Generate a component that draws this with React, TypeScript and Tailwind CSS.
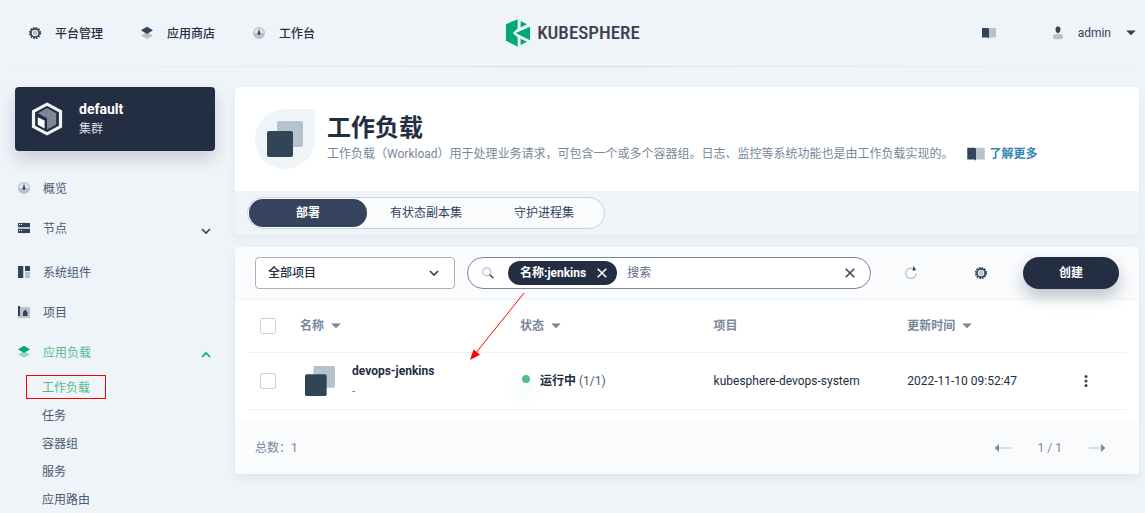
import React from 'react';

type IconProps = { className?: string };

const Gear = ({ className = 'size-4' }: IconProps) => (
  <svg viewBox="0 0 16 16" className={className} aria-hidden="true">
    <circle cx="8" cy="8" r="5.3" fill="none" stroke="#324558" strokeWidth="1.7" strokeDasharray="1.6 1.175" />
    <circle cx="8" cy="8" r="4.1" fill="#eff4f9" stroke="#324558" strokeWidth="1.7" />
    <circle cx="8" cy="8" r="2.4" fill="#b6c2cd" />
  </svg>
);

const Layers = ({ active = false }: { active?: boolean }) => (
  <svg viewBox="0 0 16 16" className="size-4" aria-hidden="true">
    <path d="M2 10.6 8 7.2l6 3.400L8 14z" fill={active ? '#90e0c5' : '#b6c2cd'} />
    <path d="M2 5.300 8 1.800l6 3.500L8 8.900z" fill={active ? '#00aa72' : '#324558'} />
  </svg>
);

const Gauge = () => (
  <svg viewBox="0 0 16 16" className="size-4" aria-hidden="true">
    <circle cx="8" cy="8" r="6" fill="#b6c2cd" />
    <path d="M3.2 8a4.8 4.8 0 0 1 9.6 0z" fill="#dfe6ed" />
    <path d="M8 3.800 9.300 8.200A1.350 1.350 0 1 1 6.700 8.200z" fill="#324558" />
  </svg>
);

const Servers = () => (
  <svg viewBox="0 0 16 16" className="size-4" aria-hidden="true">
    <path d="M7 2h2v12H7zM2 7h12v2H2z" fill="#b6c2cd" />
    <path d="M2 3h12v4H2zM2 9h12v4H2z" fill="#324558" />
    <path d="M3 4h1v1H3zM5 4h1v1H5zM3 10h1v1H3zM5 10h1v1H5z" fill="#fff" />
  </svg>
);

const Components = () => (
  <svg viewBox="0 0 16 16" className="size-4" aria-hidden="true">
    <path d="M2 2h5v12H2zM9 2h5v5H9z" fill="#324558" />
    <path d="M7 2h1v12H7zM9 8h5v6H9z" fill="#b6c2cd" />
  </svg>
);

const Project = () => (
  <svg viewBox="0 0 16 16" className="size-4" aria-hidden="true">
    <path d="M4 3h10v11H2v-2h2z" fill="#b6c2cd" />
    <path d="M2 2h2v10H2zM7 8l2.200-2.500L11.500 8v4H7z" fill="#324558" />
  </svg>
);

const Book = ({ className = 'size-4' }: IconProps) => (
  <svg viewBox="0 0 16 16" className={className} aria-hidden="true">
    <path d="M8 3.6 9 3h6v9.4H9l-1 .8z" fill="#b6c2cd" />
    <path d="M1 3h6l1 .6v9.8l-1-1H1z" fill="#324558" />
  </svg>
);

const User = () => (
  <svg viewBox="0 0 16 16" className="size-4" aria-hidden="true">
    <path d="M3 13.2V12c0-2 1.2-3 3-3h4c1.800 0 3 1 3 3v1.200c-1 .8-3 1-5 1s-4-.2-5-1z" fill="#b6c2cd" />
    <path d="M5.500 4a2.500 2.400 0 0 1 5 0c0 2-.8 4.200-2.500 4.200S5.500 6 5.500 4z" fill="#324558" />
  </svg>
);

const Caret = ({ className = '' }: IconProps) => (
  <svg viewBox="0 0 10 6" className={`h-[6px] w-[10px] ${className}`} aria-hidden="true">
    <path d="M.8.8h8.400L5 5z" fill="currentColor" stroke="currentColor" strokeWidth=".6" strokeLinejoin="round" />
  </svg>
);

const Chevron = ({ className = '' }: IconProps) => (
  <svg viewBox="0 0 10 10" className={`size-[10px] ${className}`} aria-hidden="true">
    <path d="M1 3l4 4 4-4" fill="none" stroke="currentColor" strokeWidth="1.6" />
  </svg>
);

const Cross = () => (
  <svg viewBox="0 0 10 10" className="size-[10px]" aria-hidden="true">
    <path d="M.7.7l8.600 8.600M9.300.7.7 9.300" stroke="currentColor" strokeWidth="1.500" />
  </svg>
);

const Workload = ({ className }: IconProps) => (
  <svg viewBox="0 0 36 36" className={className} aria-hidden="true">
    <rect x="10" width="26" height="26" rx="2" fill="#b6c2cd" />
    <rect y="10" width="26" height="26" rx="2" fill="#324558" />
  </svg>
);

const Arrow = ({ flip = false }: { flip?: boolean }) => (
  <svg viewBox="0 0 16 8" className={flip ? 'h-2 w-4 rotate-180' : 'h-2 w-4'} aria-hidden="true">
    <path d="M0 3h12v2H0z" fill="#d5dce3" />
    <path d="M12 0 16.500 4 12 8z" fill="#7e8b99" />
  </svg>
);

const navItems = [
  { label: '平台管理', icon: <Gear /> },
  { label: '应用商店', icon: <Layers /> },
  { label: '工作台', icon: <Gauge /> },
];

const subItems = ['工作负载', '任务', '容器组', '服务', '应用路由'];
const tabs = ['部署', '有状态副本集', '守护进程集'];

function Header() {
  return (
    <header>
      <div className="grid h-[66px] grid-cols-[1fr_auto_1fr] items-center px-[9px]">
        <nav className="flex items-center gap-9 pl-[18px]">
          {navItems.map((item) => (
            <a key={item.label} href="#" className="flex items-center gap-3 font-medium text-[#242e42]">
              {item.icon}
              <span className="pt-[2px]">{item.label}</span>
            </a>
          ))}
        </nav>
        <a href="#" className="flex items-center gap-[6px]" aria-label="KubeSphere">
          <svg viewBox="0 0 76 86" className="h-[28px] w-[26px]" aria-hidden="true">
            <path
              d="M1 16 37 1v28L22 43l15 14v28L1 67zM46 6l20 10-20 10zM75 24v41L31 43zM46 61l20 9-20 10z"
              fill="#00aa72"
            />
          </svg>
          <span className="font-['Liberation_Sans_Narrow','Roboto_Condensed','Roboto',sans-serif] text-[19px] leading-7 font-medium text-[#433d50]">
            KUBESPHERE
          </span>
        </a>
        <div className="flex items-center justify-end">
          <button type="button" aria-label="文档" className="mr-[53px]">
            <Book />
          </button>
          <button type="button" className="flex items-center text-[#36435c]">
            <User />
            <span className="ml-3">admin</span>
            <Caret className="ml-[15px] text-[#324558]" />
          </button>
        </div>
      </div>
      <div className="h-px bg-linear-to-r from-transparent via-[#d8dee5] to-transparent" />
    </header>
  );
}

function SideLink({
  icon,
  label,
  active = false,
  toggle,
}: {
  icon: React.ReactNode;
  label: string;
  active?: boolean;
  toggle?: 'open' | 'closed';
}) {
  return (
    <a
      href="#"
      className={`flex h-10 items-center gap-[11px] pr-1 ${active ? 'text-[#55bc8a]' : 'text-[#4a5974]'}`}
    >
      {icon}
      <span className="flex-1 pt-[2px]">{label}</span>
      {toggle === 'closed' && <Chevron className="mt-[6px] text-[#324558]" />}
      {toggle === 'open' && <Chevron className="mt-[6px] rotate-180 text-[#00aa72]" />}
    </a>
  );
}

function Sidebar() {
  return (
    <aside className="w-[200px] shrink-0">
      <div className="flex h-16 items-center gap-[15px] rounded bg-[#242e42] pl-[15px] shadow-[0_8px_16px_0_rgba(35,35,80,0.18)]">
        <svg viewBox="0 0 34 36" className="h-9 w-[34px]" aria-hidden="true">
          <path d="M17 3.200 30.500 10.400v15.200L17 32.800 3.500 25.600V10.400z" fill="#242e42" stroke="#f0f2f4" strokeWidth="3.200" />
          <path d="M8 12.200 17 7l9.200 5.200v11.500l-9.200 4.800V17.200z" fill="#7e8795" />
          <path d="M7.800 16.300l6.800 3.200v8L7.800 23.800z" fill="#fff" />
        </svg>
        <div>
          <div className="text-sm leading-5 font-bold text-white">default</div>
          <div className="leading-5 text-[#d8dde5]">集群</div>
        </div>
      </div>
      <nav className="mt-[17px] pl-px">
        <SideLink icon={<Gauge />} label="概览" />
        <div className="mb-1">
          <SideLink icon={<Servers />} label="节点" toggle="closed" />
        </div>
        <SideLink icon={<Components />} label="系统组件" />
        <SideLink icon={<Project />} label="项目" />
        <SideLink icon={<Layers active />} label="应用负载" active toggle="open" />
        <ul className="pt-px pl-[10px]">
          {subItems.map((label, i) => (
            <li key={label} className="flex h-7 items-center">
              <a
                href="#"
                className={
                  i === 0
                    ? 'flex h-6 w-20 items-center border border-[#ff0000] pt-[2px] pl-[15px] text-[#55bc8a]'
                    : 'pt-[2px] pl-4 text-[#4a5974]'
                }
              >
                {label}
              </a>
            </li>
          ))}
        </ul>
      </nav>
    </aside>
  );
}

function Banner() {
  return (
    <section className="overflow-hidden rounded bg-white shadow-[0_4px_8px_0_rgba(36,46,66,0.06)]">
      <div className="flex h-[104px] items-center gap-3 px-5">
        <div className="flex size-[60px] shrink-0 items-center justify-center rounded-full rounded-tr-none bg-[#eff4f9]">
          <Workload className="size-9" />
        </div>
        <div className="pb-[3px]">
          <h1 className="text-2xl leading-8 font-semibold text-[#242e42]">工作负载</h1>
          <div className="flex items-center leading-5 text-[#79879c]">
            <p>工作负载（Workload）用于处理业务请求，可包含一个或多个容器组。日志、监控等系统功能也是由工作负载实现的。</p>
            <a href="#" className="ml-3 flex shrink-0 items-center gap-1 font-bold text-[#3385b0]">
              <Book className="size-5" />
              了解更多
            </a>
          </div>
        </div>
      </div>
      <div className="bg-[#eff4f9] px-3 py-[6px]">
        <div role="tablist" className="flex h-8 w-[358px] rounded-full border border-[#ccd3db] bg-[#f9fbfd] p-px">
          {tabs.map((label, i) => (
            <button
              key={label}
              type="button"
              role="tab"
              aria-selected={i === 0}
              className={`flex-1 rounded-full ${i === 0 ? 'bg-[#36435c] font-bold text-white' : 'text-[#36435c]'}`}
            >
              {label}
            </button>
          ))}
        </div>
      </div>
    </section>
  );
}

function Toolbar() {
  return (
    <div className="flex h-[53px] items-center rounded-t border-b border-[#eff4f9] bg-[#f9fbfd] px-5">
      <div className="relative mr-3 w-[200px] shrink-0">
        <select
          aria-label="项目"
          className="h-8 w-full appearance-none rounded border border-[#abb4be] bg-white pl-3 font-medium text-[#242e42]"
        >
          <option>全部项目</option>
        </select>
        <Chevron className="pointer-events-none absolute top-[11px] right-4 text-[#324558]" />
      </div>
      <div className="flex h-8 min-w-0 flex-1 items-center rounded-full border border-[#79879c] bg-white pr-[15px] pl-[14px]">
        <svg viewBox="0 0 12 12" className="size-3" aria-hidden="true">
          <circle cx="4.800" cy="4.800" r="4" fill="none" stroke="#b6c2cd" strokeWidth="1.200" />
          <path d="M7.800 7.800 11.300 11.300" stroke="#324558" strokeWidth="1.500" />
        </svg>
        <span className="ml-[14px] flex h-6 items-center gap-[11px] rounded-full bg-[#242e42] pr-[10px] pl-3 font-bold whitespace-nowrap text-white">
          名称:jenkins
          <button type="button" aria-label="移除">
            <Cross />
          </button>
        </span>
        <input
          type="text"
          aria-label="搜索"
          placeholder="搜索"
          className="ml-[10px] min-w-0 flex-1 outline-none placeholder:text-[#5f708a]"
        />
        <button type="button" aria-label="清除" className="text-[#324558]">
          <Cross />
        </button>
      </div>
      <button type="button" aria-label="刷新" className="ml-3 flex h-8 w-14 items-center justify-center">
        <svg viewBox="0 0 16 16" className="size-4" aria-hidden="true">
          <path d="M9.500 3.300A5.200 5.200 0 1 0 13.200 8.500" fill="none" stroke="#b6c2cd" strokeWidth="1.300" />
          <path d="M10.300 1l2.900 4-3.700.8z" fill="#324558" />
        </svg>
      </button>
      <button type="button" aria-label="设置" className="mx-3 flex h-8 w-[60px] items-center justify-center">
        <Gear />
      </button>
      <button
        type="button"
        className="h-8 w-24 shrink-0 rounded-full bg-[#242e42] font-bold text-white shadow-[0_8px_16px_0_rgba(36,46,66,0.28)]"
      >
        创建
      </button>
    </div>
  );
}

const checkbox = 'block size-4 appearance-none rounded-xs border border-[#ccd3db] bg-white';

function WorkloadTable() {
  return (
    <section className="relative mt-3 rounded bg-white shadow-[0_4px_8px_0_rgba(36,46,66,0.08)]">
      <Toolbar />
      <div className="px-3">
        <table className="w-full table-fixed text-left">
          <colgroup>
            <col className="w-[53px]" />
            <col className="w-[25%]" />
            <col className="w-[22%]" />
            <col className="w-[22%]" />
            <col />
            <col className="w-[49px]" />
          </colgroup>
          <thead>
            <tr className="h-[52px] border-b border-[#eff4f9] text-[#79879c]">
              <th className="pl-[13px]">
                <input type="checkbox" aria-label="全选" className={checkbox} />
              </th>
              <th className="font-semibold">
                <span className="flex items-center gap-[7px]">名称<Caret /></span>
              </th>
              <th className="font-semibold">
                <span className="flex items-center gap-[7px]">状态<Caret /></span>
              </th>
              <th className="font-semibold">项目</th>
              <th className="font-semibold">
                <span className="flex items-center gap-[7px]">更新时间<Caret /></span>
              </th>
              <th aria-label="操作" />
            </tr>
          </thead>
          <tbody>
            <tr className="h-[57px] border-b border-[#eff4f9] text-[#242e42]">
              <td className="pl-[13px]">
                <input type="checkbox" aria-label="选择 devops-jenkins" className={checkbox} />
              </td>
              <td>
                <div className="flex items-center gap-[17px] pl-[5px]">
                  <Workload className="size-[30px] shrink-0" />
                  <div className="leading-5">
                    <a href="#" className="font-bold">devops-jenkins</a>
                    <div className="text-[#79879c]">-</div>
                  </div>
                </div>
              </td>
              <td>
                <div className="flex items-center">
                  <span className="mr-[10px] mb-[3px] ml-[2px] size-2 rounded-full bg-[#55bc8a] shadow-[0_8px_16px_0_rgba(85,188,138,0.4)]" />
                  <span className="font-semibold">运行中</span>
                  <span className="ml-[3px] text-[#4a5974]">(1/1)</span>
                </div>
              </td>
              <td>kubesphere-devops-system</td>
              <td>2022-11-10 09:52:47</td>
              <td>
                <button type="button" aria-label="更多操作" className="block">
                  <svg viewBox="0 0 16 16" className="size-4" fill="#324558" aria-hidden="true">
                    <circle cx="8" cy="3.500" r="1.500" />
                    <circle cx="8" cy="8" r="1.500" />
                    <circle cx="8" cy="12.500" r="1.500" />
                  </svg>
                </button>
              </td>
            </tr>
          </tbody>
        </table>
      </div>
      <footer className="mt-3 flex h-[52px] items-center justify-between rounded-b bg-[#f9fbfd] pr-[34px] pl-5 text-[#79879c]">
        <span>总数：1</span>
        <div className="flex items-center gap-[27px]">
          <button type="button" aria-label="上一页">
            <Arrow flip />
          </button>
          <span>1 / 1</span>
          <button type="button" aria-label="下一页">
            <Arrow />
          </button>
        </div>
      </footer>
      <svg
        viewBox="0 0 56 70"
        className="pointer-events-none absolute top-[45px] left-[234px] h-[70px] w-[56px]"
        aria-hidden="true"
      >
        <path d="M55 1 6 62" stroke="#ff0000" strokeWidth="1" />
        <path d="M1 68 4.500 57.500 11 62.700z" fill="#ff0000" />
      </svg>
    </section>
  );
}

export default function App() {
  return (
    <div className="min-h-screen bg-[#eff4f9] font-['Roboto','Noto_Sans_CJK_SC',sans-serif] text-xs text-[#242e42]">
      <Header />
      <div className="flex gap-5 pt-5 pr-[6px] pl-[15px]">
        <Sidebar />
        <main className="min-w-0 flex-1">
          <Banner />
          <WorkloadTable />
        </main>
      </div>
    </div>
  );
}
